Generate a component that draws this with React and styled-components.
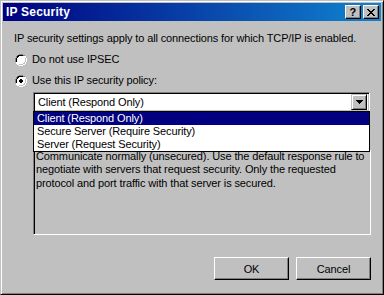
import React from "react";
import styled, { createGlobalStyle } from "styled-components";

const GlobalStyle = createGlobalStyle`
  html, body {
    margin: 0;
    padding: 0;
    background: #c0c0c0;
  }
  * {
    box-sizing: border-box;
  }
`;

const Window = styled.div`
  width: 384px;
  height: 295px;
  background: #c0c0c0;
  border: 1px solid;
  border-color: #c0c0c0 #000 #000 #c0c0c0;
  box-shadow: inset 1px 1px #fff, inset -1px -1px #808080;
  padding: 2px;
  display: flex;
  flex-direction: column;
  font-family: "Liberation Sans", Arial, sans-serif;
  font-size: 11px;
  letter-spacing: -0.12px;
  color: #000;
`;

const TitleBar = styled.div`
  height: 18px;
  background: linear-gradient(to right, #000080, #1084d0);
  display: flex;
  align-items: center;
  padding: 0 2px 0 3px;
  color: #fff;
  font-weight: bold;
  font-size: 12px;
  letter-spacing: 0.2px;
`;

const TitleText = styled.span`
  flex: 1;
`;

const TitleButton = styled.div`
  width: 16px;
  height: 14px;
  margin-left: ${(p) => (p.$gap ? "2px" : "0")};
  background: #c0c0c0;
  border: 1px solid;
  border-color: #fff #000 #000 #fff;
  box-shadow: inset -1px -1px #808080;
  display: flex;
  align-items: center;
  justify-content: center;
  color: #000;
  font-size: 11px;
  font-weight: bold;
  line-height: 1;
`;

const Client = styled.div`
  flex: 1;
  display: flex;
  flex-direction: column;
  padding: 11px 10px 0 11px;
`;

const Text = styled.div`
  line-height: 13px;
  white-space: nowrap;
`;

const RadioRow = styled.label`
  display: flex;
  align-items: center;
  height: 13px;
  margin-top: ${(p) => p.$top}px;
  margin-left: 1px;
  gap: 5px;
  line-height: 13px;
`;

const Indent = styled.div`
  margin-left: 19px;
  display: flex;
  flex-direction: column;
`;

const ComboWrap = styled.div`
  position: relative;
  margin-top: 5px;
  margin-right: 1px;
`;

const Combo = styled.div`
  height: 20px;
  background: #fff;
  border: 1px solid;
  border-color: #808080 #fff #fff #808080;
  box-shadow: inset 1px 1px #000, inset -1px -1px #c0c0c0;
  display: flex;
  align-items: center;
  padding: 0 2px 0 4px;
`;

const ComboValue = styled.span`
  flex: 1;
  line-height: 13px;
`;

const ArrowButton = styled.div`
  width: 16px;
  height: 16px;
  background: #c0c0c0;
  border: 1px solid;
  border-color: #c0c0c0 #000 #000 #c0c0c0;
  box-shadow: inset 1px 1px #fff, inset -1px -1px #808080;
  display: flex;
  align-items: center;
  justify-content: center;
`;

const DropList = styled.div`
  position: absolute;
  top: 19px;
  left: 0;
  right: 0;
  background: #fff;
  border: 1px solid #000;
  z-index: 2;
`;

const DropItem = styled.div`
  height: 13px;
  line-height: 13px;
  padding-left: 3px;
  white-space: nowrap;
  background: ${(p) => (p.$selected ? "#000080" : "#fff")};
  color: ${(p) => (p.$selected ? "#fff" : "#000")};
`;

const DescBox = styled.div`
  margin-top: 37px;
  height: 86px;
  border: 1px solid;
  border-color: #808080 #fff #fff #808080;
  box-shadow: inset 1px 0 #000;
  padding: 0 2px;
  line-height: 13.3px;
  white-space: nowrap;
`;

const ButtonRow = styled.div`
  display: flex;
  justify-content: flex-end;
  gap: 7px;
  margin-top: 22px;
`;

const Button = styled.button`
  width: 75px;
  height: 23px;
  background: #c0c0c0;
  border: 1px solid;
  border-color: #fff #000 #000 #fff;
  box-shadow: inset -1px -1px #808080;
  font-family: inherit;
  font-size: 11px;
  letter-spacing: inherit;
  color: #000;
  padding: 0;
`;

function Radio({ checked }) {
  return (
    <svg width="12" height="12" viewBox="0 0 12 12" shapeRendering="crispEdges">
      <path d="M4 0h4v1h2v1h1v2h1v4h-1v2h-1v1h-2v1h-4v-1h-2v-1h-1v-2h-1v-4h1v-2h1v-1h2z" fill="#fff" />
      <path d="M4 0h4v1h2v1h-2v-1h-4v1h-2v2h-1v4h-1v-4h1v-2h1v-1h2z" fill="#808080" />
      <path d="M4 1h4v1h-4v1h-1v1h-1v4h-1v-4h1v-2h1v-1z" fill="#000" />
      <path d="M10 2h1v2h1v4h-1v2h-1v1h-2v1h-4v-1h4v-1h2v-2h1v-4h-1z" fill="#fff" />
      <path d="M10 3v1h1v4h-1v2h-2v1h-4v-1h4v-1h1v-1h1v-4z" fill="#c0c0c0" />
      {checked && <path d="M5 4h2v1h1v2h-1v1h-2v-1h-1v-2h1z" fill="#000" />}
    </svg>
  );
}

export default function App() {
  return (
    <>
      <GlobalStyle />
      <Window>
        <TitleBar>
          <TitleText>IP Security</TitleText>
          <TitleButton>?</TitleButton>
          <TitleButton $gap>
            <svg width="8" height="7" viewBox="0 0 8 7" shapeRendering="crispEdges">
              <path d="M0 0h2v1h1v1h2v-1h1v-1h2v1h-1v1h-1v1h-1v1h1v1h1v1h1v1h-2v-1h-1v-1h-2v1h-1v1h-2v-1h1v-1h1v-1h1v-1h-1v-1h-1v-1h-1z" fill="#000" />
            </svg>
          </TitleButton>
        </TitleBar>
        <Client>
          <Text>IP security settings apply to all connections for which TCP/IP is enabled.</Text>
          <RadioRow $top={8}>
            <Radio />
            Do not use IPSEC
          </RadioRow>
          <RadioRow $top={8}>
            <Radio checked />
            Use this IP security policy:
          </RadioRow>
          <Indent>
            <ComboWrap>
              <Combo>
                <ComboValue>Client (Respond Only)</ComboValue>
                <ArrowButton>
                  <svg width="7" height="4" viewBox="0 0 7 4" shapeRendering="crispEdges">
                    <path d="M0 0h7v1h-1v1h-1v1h-1v1h-1v-1h-1v-1h-1v-1h-1z" fill="#000" />
                  </svg>
                </ArrowButton>
              </Combo>
              <DropList>
                <DropItem $selected>Client (Respond Only)</DropItem>
                <DropItem>Secure Server (Require Security)</DropItem>
                <DropItem>Server (Request Security)</DropItem>
              </DropList>
            </ComboWrap>
            <DescBox>
              Communicate normally (unsecured). Use the default response rule to
              <br />
              negotiate with servers that request security. Only the requested
              <br />
              protocol and port traffic with that server is secured.
            </DescBox>
          </Indent>
          <ButtonRow>
            <Button>OK</Button>
            <Button>Cancel</Button>
          </ButtonRow>
        </Client>
      </Window>
    </>
  );
}
